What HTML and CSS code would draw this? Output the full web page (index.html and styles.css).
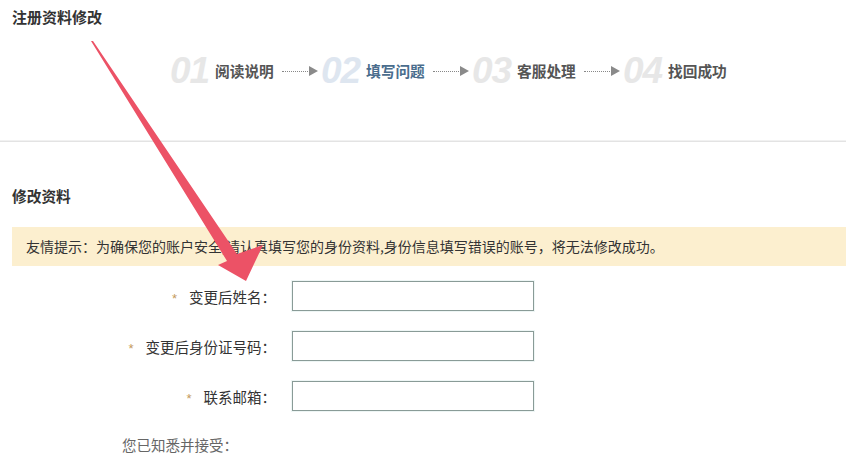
FILE: index.html
```html
<!DOCTYPE html>
<html lang="zh-CN">
<head>
<meta charset="utf-8">
<title>注册资料修改</title>
<link rel="stylesheet" href="styles.css">
</head>
<body>
<div class="page">
  <header class="top">
    <h1 class="title">注册资料修改</h1>
    <div class="steps">
      <div class="step"><span class="num">01</span><span class="name">阅读说明</span></div>
      <div class="link"><span class="dots"></span><span class="tri"></span></div>
      <div class="step active"><span class="num">02</span><span class="name">填写问题</span></div>
      <div class="link"><span class="dots"></span><span class="tri"></span></div>
      <div class="step"><span class="num">03</span><span class="name">客服处理</span></div>
      <div class="link"><span class="dots"></span><span class="tri"></span></div>
      <div class="step"><span class="num">04</span><span class="name">找回成功</span></div>
    </div>
  </header>
  <main class="content">
    <h2 class="subtitle">修改资料</h2>
    <div class="tip">友情提示：为确保您的账户安全,请认真填写您的身份资料,身份信息填写错误的账号，将无法修改成功。</div>
    <form class="form">
      <div class="row">
        <label class="label"><span class="star">*</span>变更后姓名：</label>
        <input class="field" type="text">
      </div>
      <div class="row">
        <label class="label"><span class="star">*</span>变更后身份证号码：</label>
        <input class="field" type="text">
      </div>
      <div class="row">
        <label class="label"><span class="star">*</span>联系邮箱：</label>
        <input class="field" type="text">
      </div>
      <p class="agree">您已知悉并接受：</p>
    </form>
  </main>
  <svg class="pointer" width="846" height="455" viewBox="0 0 846 455" aria-hidden="true">
    <polygon points="91,41 93,41 237,254 263,245 246,281 218,265 227,261" fill="#ec5266"/>
  </svg>
</div>
</body>
</html>
```
FILE: styles.css
```css
* { box-sizing: border-box; }
html, body { margin: 0; padding: 0; background: #fff; }
body {
  font-family: "Noto Sans CJK SC", "Noto Sans", sans-serif;
  color: #333;
  overflow: hidden;
}
.page { position: relative; width: 846px; height: 455px; overflow: hidden; }

.top {
  height: 142px;
  border-bottom: 1px solid #e3e3e3;
  box-shadow: 0 -5px 0 -4px #f1f1f1 inset;
}
.title {
  margin: 0;
  padding: 7px 0 0 12px;
  font-size: 15px;
  line-height: 20px;
  font-weight: bold;
  color: #333;
}
.steps {
  display: flex;
  align-items: center;
  padding-left: 170px;
  margin-top: 24px;
  height: 40px;
}
.step { display: flex; align-items: center; }
.num {
  width: 45px;
  font-family: "Liberation Sans", Arial, sans-serif;
  font-style: italic;
  font-weight: bold;
  font-size: 37px;
  line-height: 40px;
  letter-spacing: -1px;
  color: #e7e7e7;
}
.name {
  width: 59px;
  font-size: 14.7px;
  line-height: 20px;
  font-weight: bold;
  color: #555;
  white-space: nowrap;
}
.step.active .num { color: #dee6f0; }
.step.active .name { color: #4a6d8d; }
.link { display: flex; align-items: center; margin: 0 3px 0 8px; }
.dots {
  width: 26px;
  border-top: 1px dotted #888;
}
.tri {
  width: 0; height: 0;
  border-top: 5px solid transparent;
  border-bottom: 5px solid transparent;
  border-left: 9px solid #8a8a8a;
  margin-left: 1px;
}

.subtitle {
  margin: 0;
  padding: 44px 0 0 12px;
  font-size: 14.7px;
  line-height: 20px;
  font-weight: bold;
  color: #333;
}
.tip {
  margin: 21px 0 0 12px;
  height: 39px;
  padding-left: 14px;
  background: #fcefcf;
  font-size: 14px;
  line-height: 39px;
  color: #333;
  white-space: nowrap;
}

.form { margin: 15px 0 0 0; }
.row {
  display: flex;
  align-items: center;
  height: 30px;
  margin-bottom: 20px;
}
.label {
  width: 276px;
  text-align: right;
  font-size: 14.5px;
  color: #333;
  margin-right: 16px;
}
.star {
  font-family: "Liberation Sans", Arial, sans-serif;
  color: #c49a5c;
  font-size: 13px;
  margin-right: 12px;
}
.field {
  width: 242px;
  height: 30px;
  border: 1px solid #899b97;
  box-shadow: 0 0 0 1px #eef6f5;
  background: #fff;
  margin: 0;
  padding: 0 6px;
}
.agree {
  margin: 0;
  padding: 4px 0 0 122px;
  font-size: 14.5px;
  line-height: 20px;
  color: #666;
}

.pointer { position: absolute; left: 0; top: 0; pointer-events: none; }
```
